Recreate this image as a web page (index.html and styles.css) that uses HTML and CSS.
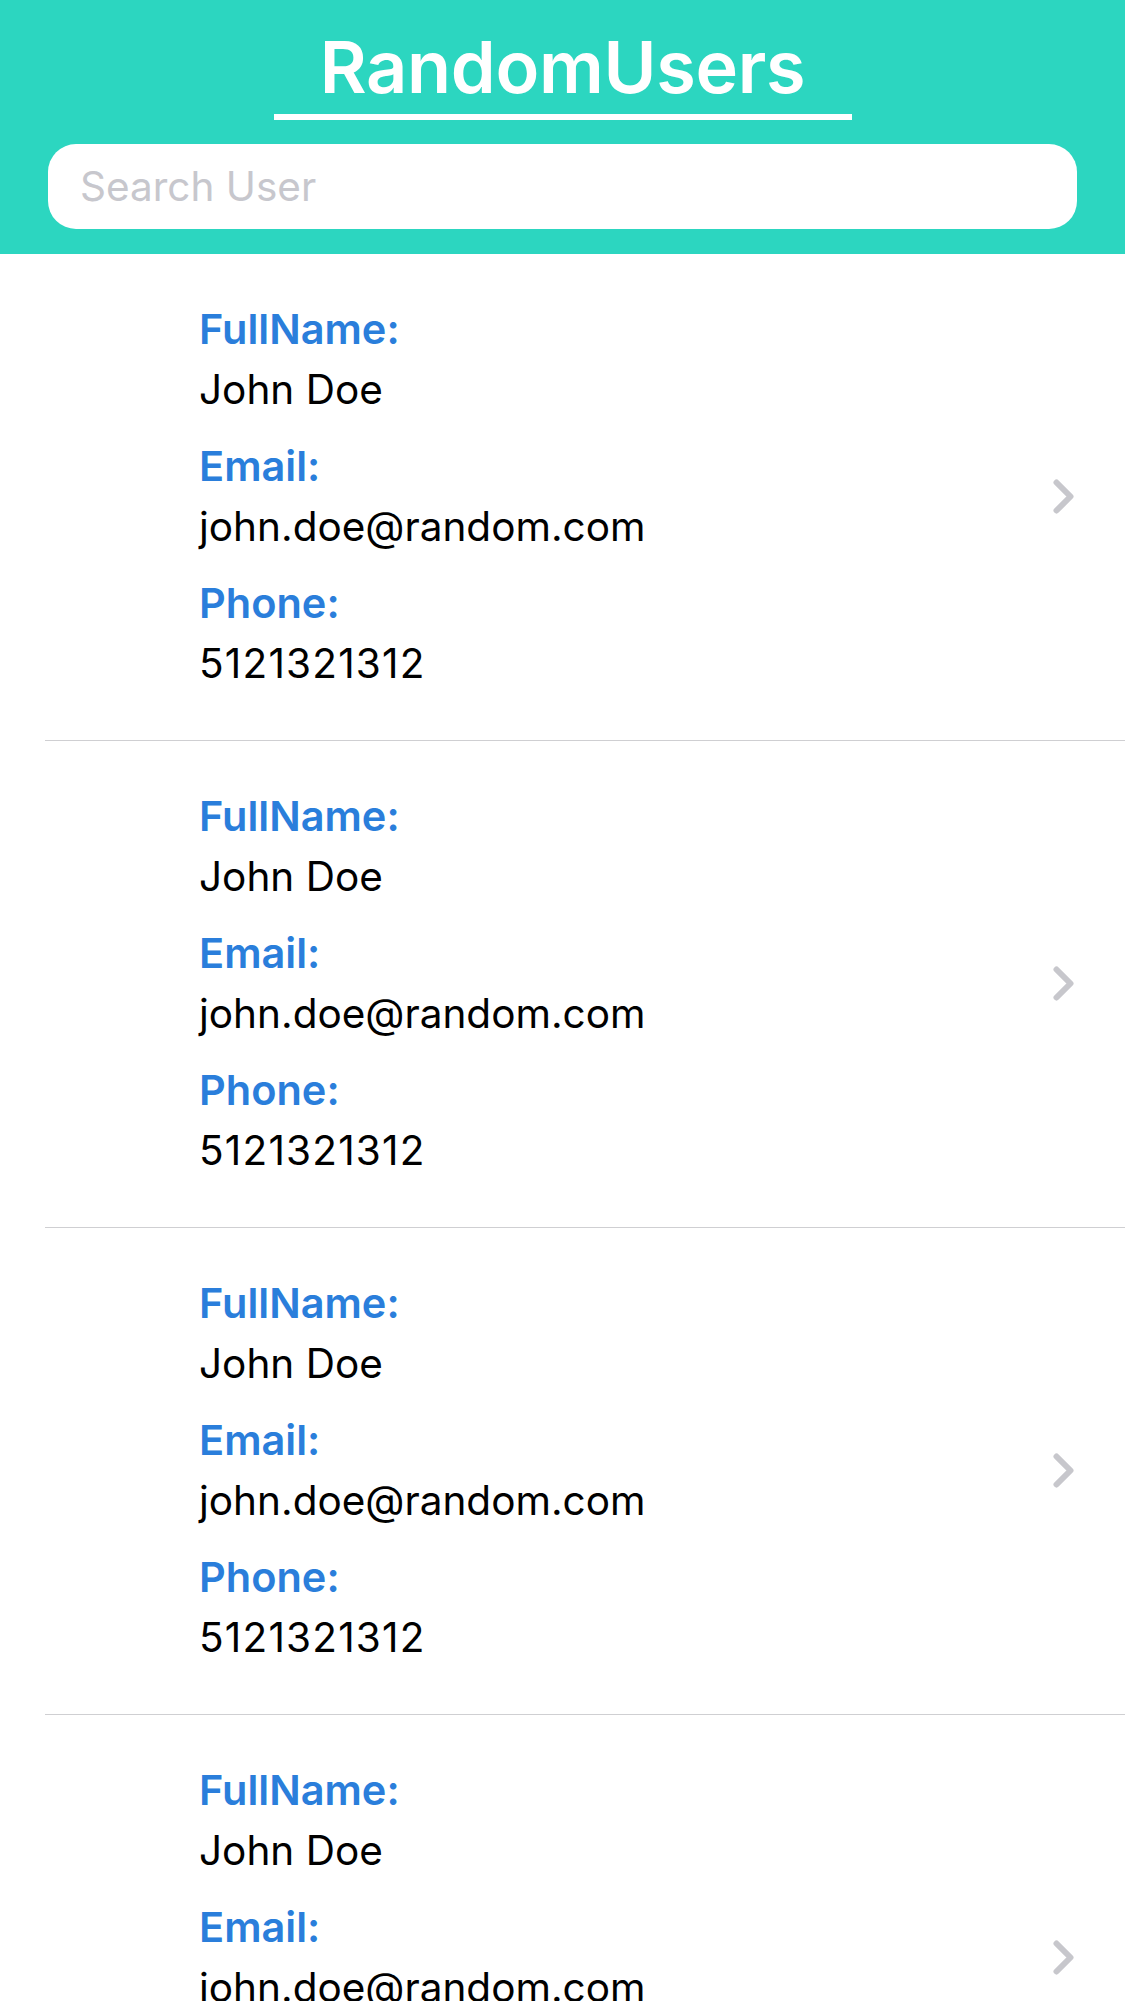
FILE: index.html
```html
<!DOCTYPE html>
<html lang="en">
<head>
<meta charset="utf-8">
<title>RandomUsers</title>
<link rel="stylesheet" href="styles.css">
</head>
<body>
<header class="header">
  <div class="title-wrap"><h1 class="title">RandomUsers</h1></div>
  <div class="search"><span class="placeholder">Search User</span></div>
</header>
<main class="list">
  <div class="row">
    <div class="info">
      <div class="field"><div class="label">FullName:</div><div class="value">John Doe</div></div>
      <div class="field"><div class="label">Email:</div><div class="value">john.doe@random.com</div></div>
      <div class="field"><div class="label">Phone:</div><div class="value num">5121321312</div></div>
    </div>
    <svg class="chevron" width="21" height="35" viewBox="0 0 21 35"><path d="M3.5 3.5 L17.5 17.5 L3.5 31.5" fill="none" stroke="#c7c7cc" stroke-width="6" stroke-linecap="round" stroke-linejoin="round"/></svg>
  </div>
  <div class="row">
    <div class="info">
      <div class="field"><div class="label">FullName:</div><div class="value">John Doe</div></div>
      <div class="field"><div class="label">Email:</div><div class="value">john.doe@random.com</div></div>
      <div class="field"><div class="label">Phone:</div><div class="value num">5121321312</div></div>
    </div>
    <svg class="chevron" width="21" height="35" viewBox="0 0 21 35"><path d="M3.5 3.5 L17.5 17.5 L3.5 31.5" fill="none" stroke="#c7c7cc" stroke-width="6" stroke-linecap="round" stroke-linejoin="round"/></svg>
  </div>
  <div class="row">
    <div class="info">
      <div class="field"><div class="label">FullName:</div><div class="value">John Doe</div></div>
      <div class="field"><div class="label">Email:</div><div class="value">john.doe@random.com</div></div>
      <div class="field"><div class="label">Phone:</div><div class="value num">5121321312</div></div>
    </div>
    <svg class="chevron" width="21" height="35" viewBox="0 0 21 35"><path d="M3.5 3.5 L17.5 17.5 L3.5 31.5" fill="none" stroke="#c7c7cc" stroke-width="6" stroke-linecap="round" stroke-linejoin="round"/></svg>
  </div>
  <div class="row">
    <div class="info">
      <div class="field"><div class="label">FullName:</div><div class="value">John Doe</div></div>
      <div class="field"><div class="label">Email:</div><div class="value">john.doe@random.com</div></div>
      <div class="field"><div class="label">Phone:</div><div class="value num">5121321312</div></div>
    </div>
    <svg class="chevron" width="21" height="35" viewBox="0 0 21 35"><path d="M3.5 3.5 L17.5 17.5 L3.5 31.5" fill="none" stroke="#c7c7cc" stroke-width="6" stroke-linecap="round" stroke-linejoin="round"/></svg>
  </div>
</main>
</body>
</html>
```
FILE: styles.css
```css
* { box-sizing: border-box; }
html, body { margin: 0; padding: 0; background: #ffffff; }
body {
  font-family: Inter, "Liberation Sans", Arial, sans-serif;
  color: #000;
  overflow: hidden;
}
.header {
  background: #2cd6c0;
  padding: 29px 48px 25px 48px;
  display: flex;
  flex-direction: column;
  align-items: center;
}
.title-wrap {
  width: 578px;
  border-bottom: 6px solid #ffffff;
  padding-bottom: 10px;
  display: flex;
  justify-content: center;
}
.title {
  margin: 0;
  font-size: 72px;
  line-height: 75px;
  font-weight: 600;
  color: #ffffff;
  letter-spacing: -0.3px;
}
.search {
  margin-top: 24px;
  width: 1029px;
  height: 85px;
  background: #ffffff;
  border-radius: 28px;
  display: flex;
  align-items: center;
  padding-left: 32px;
}
.placeholder {
  font-size: 40.5px;
  color: #c7c7cd;
}
.list { display: flex; flex-direction: column; }
.row {
  margin-left: 45px;
  border-bottom: 1px solid #cfcfd2;
  display: flex;
  align-items: center;
  justify-content: space-between;
  padding: 51px 51px 52px 154px;
}
.info { display: flex; flex-direction: column; gap: 28px; }
.field { display: flex; flex-direction: column; gap: 13px; }
.label {
  font-size: 41.5px;
  line-height: 48px;
  font-weight: 600;
  color: #2a7edb;
}
.value {
  font-size: 40.5px;
  line-height: 48px;
  color: #000;
}
.num {
  letter-spacing: 1.2px;
}
.chevron { display: block; flex-shrink: 0; }
```
